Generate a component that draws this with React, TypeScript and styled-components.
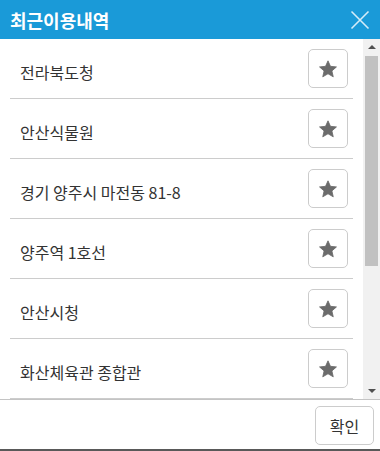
import React from "react";
import styled, { createGlobalStyle } from "styled-components";

const Global = createGlobalStyle`
  html, body { margin: 0; padding: 0; background: #fff; }
  body { font-family: "Noto Sans CJK KR", "Noto Sans", sans-serif; }
  * { box-sizing: border-box; }
`;

const Dialog = styled.div`
  width: 380px;
  height: 451px;
  display: flex;
  flex-direction: column;
  background: #fff;
  border-bottom: 2px solid #595959;
`;

const Header = styled.div`
  height: 39px;
  flex: none;
  background: #1a9ad8;
  display: flex;
  align-items: center;
  justify-content: space-between;
  padding: 0 10px 0 10px;
`;

const Title = styled.h1`
  margin: 0;
  font-size: 18px;
  font-weight: 700;
  color: #fff;
  line-height: 1;
`;

const CloseButton = styled.button`
  border: 0;
  background: transparent;
  padding: 0;
  width: 20px;
  height: 20px;
  display: flex;
  align-items: center;
  justify-content: center;
  cursor: pointer;
`;

const Body = styled.div`
  flex: 1;
  min-height: 0;
  display: flex;
`;

const List = styled.ul`
  flex: 1;
  margin: 0;
  padding: 0;
  list-style: none;
  overflow: hidden;
`;

const ScrollBar = styled.div`
  width: 17px;
  flex: none;
  background: #f1f1f1;
  display: flex;
  flex-direction: column;
`;

const ArrowButton = styled.div`
  height: 17px;
  flex: none;
  display: flex;
  align-items: center;
  justify-content: center;
`;

const Arrow = styled.span<{ $down?: boolean }>`
  width: 0;
  height: 0;
  border-left: 4px solid transparent;
  border-right: 4px solid transparent;
  ${(p) =>
    p.$down
      ? "border-top: 4px solid #505050; margin-top: 1px;"
      : "border-bottom: 4px solid #505050; margin-bottom: 1px;"}
`;

const Track = styled.div`
  flex: 1;
  padding: 0 2px;
`;

const Thumb = styled.div`
  background: #c1c1c1;
  width: 100%;
`;

const Row = styled.li`
  height: 60px;
  margin: 0 10px;
  padding: 0 5px 0 10px;
  border-bottom: 1px solid #cccccc;
  display: flex;
  align-items: center;
  justify-content: space-between;
`;

const Name = styled.span`
  font-size: 16px;
  color: #333;
  padding-top: 7px;
  line-height: 24px;
`;

const StarButton = styled.button`
  width: 40px;
  height: 39px;
  border: 1px solid #cccccc;
  border-radius: 5px;
  background: #fff;
  display: flex;
  align-items: center;
  justify-content: center;
  padding: 0;
  cursor: pointer;
`;

const Footer = styled.div`
  height: 50px;
  flex: none;
  border-top: 1px solid #c4c4c4;
  display: flex;
  justify-content: flex-end;
  align-items: flex-start;
  padding: 6px 6px 0 0;
`;

const ConfirmButton = styled.button`
  width: 59px;
  height: 39px;
  border: 1px solid #cccccc;
  border-radius: 5px;
  background: #fff;
  font-family: "Noto Sans CJK KR", "Noto Sans", sans-serif;
  font-size: 16px;
  color: #333;
  padding: 0;
  cursor: pointer;
`;

const Star = () => (
  <svg width="20" height="20" viewBox="0 0 24 24">
    <path
      d="M12 2.2l2.95 6.6 7.2.7-5.45 4.8 1.6 7.1L12 17.7l-6.3 3.7 1.6-7.1L1.85 9.5l7.2-.7z"
      fill="#6b6b6b"
      stroke="#6b6b6b"
      strokeWidth="1"
      strokeLinejoin="round"
    />
  </svg>
);

const CloseIcon = () => (
  <svg width="20" height="20" viewBox="0 0 20 20">
    <path d="M1.5 1.5L18.5 18.5M18.5 1.5L1.5 18.5" stroke="#d4ecf8" strokeWidth="1.6" />
  </svg>
);

const items = [
  "전라북도청",
  "안산식물원",
  "경기 양주시 마전동 81-8",
  "양주역 1호선",
  "안산시청",
  "화산체육관 종합관",
];

// visible fraction of the list content
const visibleRatio = 0.645;

export default function App() {
  return (
    <>
      <Global />
      <Dialog>
        <Header>
          <Title>최근이용내역</Title>
          <CloseButton aria-label="닫기">
            <CloseIcon />
          </CloseButton>
        </Header>
        <Body>
          <List>
            {items.map((name) => (
              <Row key={name}>
                <Name>{name}</Name>
                <StarButton aria-label="즐겨찾기">
                  <Star />
                </StarButton>
              </Row>
            ))}
          </List>
          <ScrollBar>
            <ArrowButton>
              <Arrow />
            </ArrowButton>
            <Track>
              <Thumb style={{ height: `${visibleRatio * 100}%` }} />
            </Track>
            <ArrowButton>
              <Arrow $down />
            </ArrowButton>
          </ScrollBar>
        </Body>
        <Footer>
          <ConfirmButton>확인</ConfirmButton>
        </Footer>
      </Dialog>
    </>
  );
}
